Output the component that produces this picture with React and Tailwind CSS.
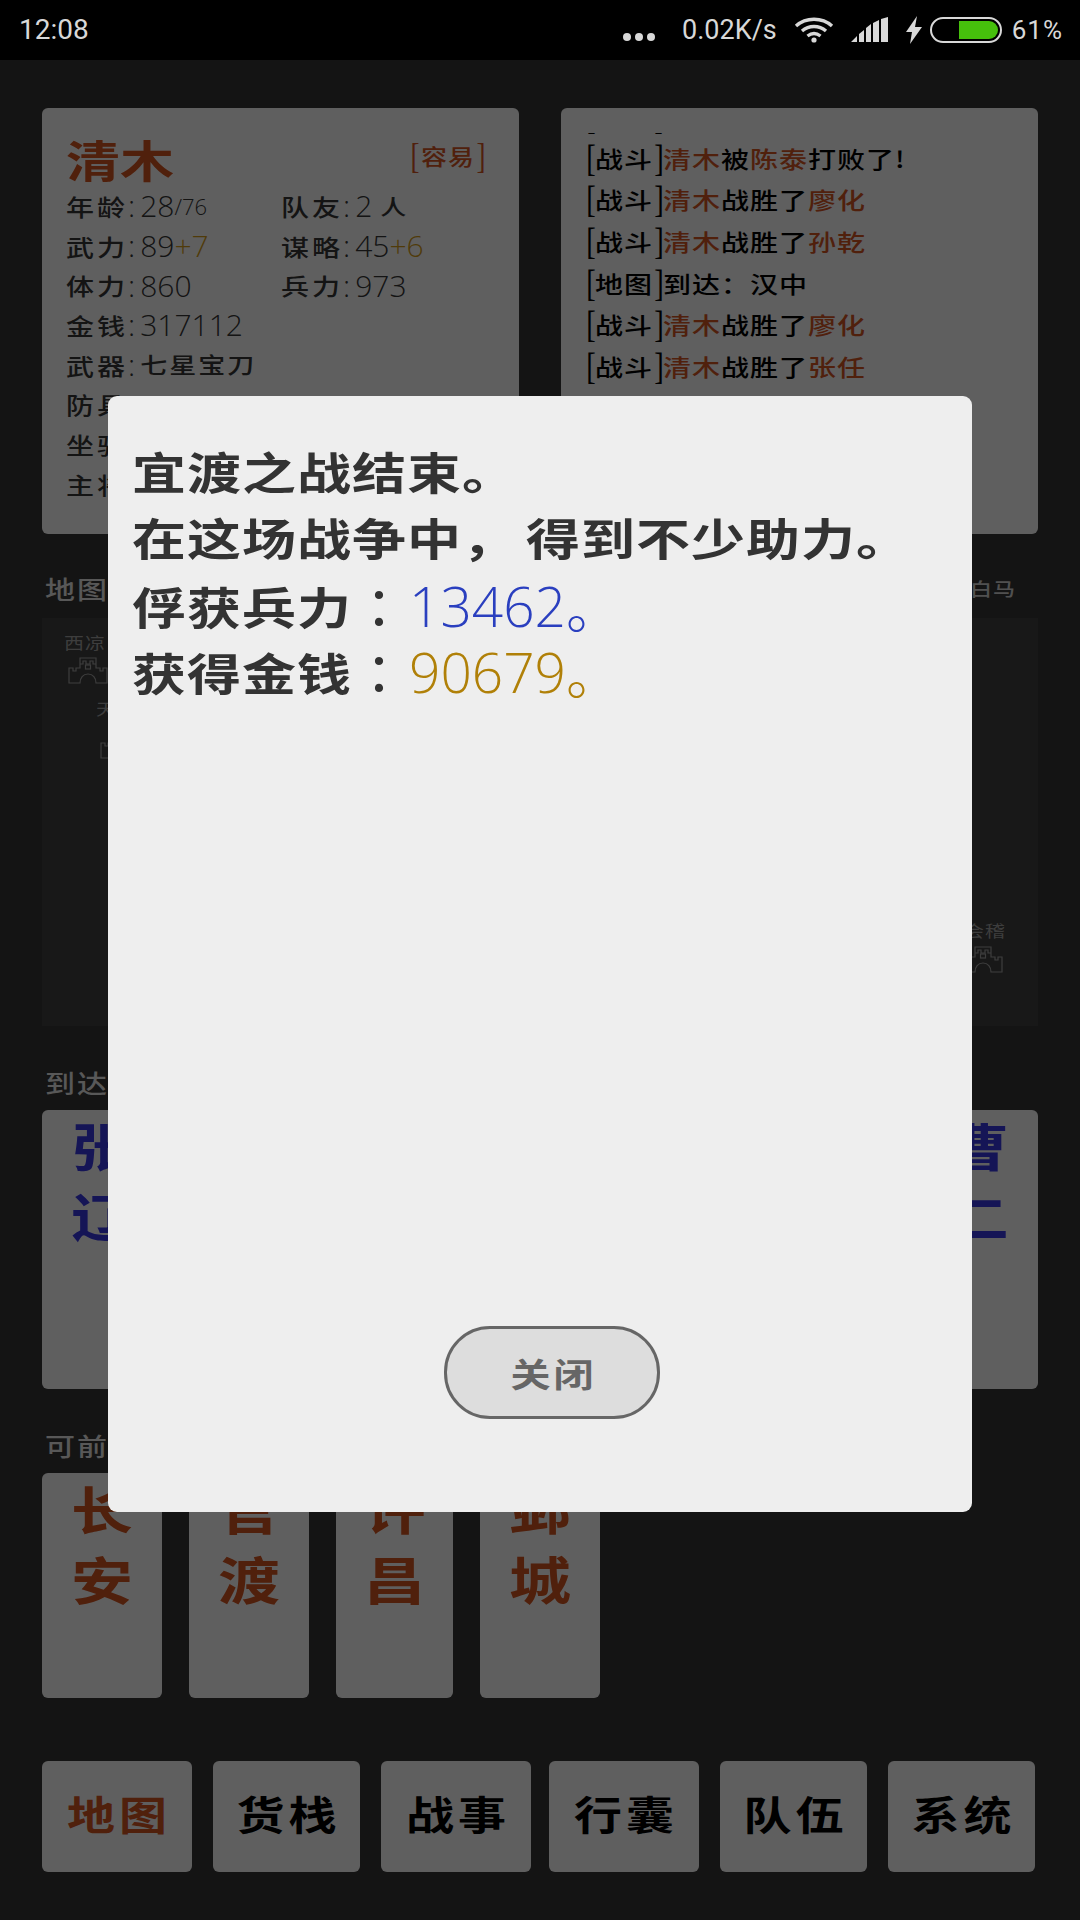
const cjk = "font-['Noto_Sans_CJK_SC',sans-serif]";
const num = "font-['Open_Sans',sans-serif] font-light";

function Squat({ className = "", children }) {
  return <span className={`inline-block origin-center scale-y-[0.82] ${className}`}>{children}</span>;
}

function Castle({ className = "" }) {
  return (
    <svg viewBox="0 0 40 27" className={className} fill="none" stroke="#9a9a9a" strokeWidth="1.2">
      <path d="M1 26V11h4v3h3v-3h4V1h16v10h4v3h3v-3h4v15H28c0-5-3-9-8-9s-8 4-8 9z" />
      <path d="M12 7h3V4h3v3h4V4h3v3h3" />
      <rect x="17.5" y="8" width="5" height="4" />
    </svg>
  );
}

function StatusBar() {
  return (
    <div className="relative z-20 h-[60px] bg-black flex items-center text-[#d8d8d8] font-['Roboto',sans-serif]">
      <span className="ml-[19px] text-[28px]">12:08</span>
      <div className="ml-auto flex items-center mr-[17px]">
        <svg viewBox="0 0 32 8" className="w-[32px] h-[8px] mt-[14px] fill-[#d8d8d8]">
          <circle cx="4" cy="4" r="4" />
          <circle cx="16" cy="4" r="4" />
          <circle cx="28" cy="4" r="4" />
        </svg>
        <span className="ml-[27px] text-[27px]">0.02K/s</span>
        <svg viewBox="0 0 40 26" className="ml-[17px] w-[40px] h-[26px]" fill="none" stroke="#d8d8d8" strokeWidth="3.4">
          <path d="M2 9c10-9 26-9 36 0" />
          <path d="M8 14c7-6 17-6 24 0" />
          <path d="M13.500 19c4-3 9-3 13 0" />
          <circle cx="20" cy="23" r="2.600" fill="#d8d8d8" stroke="none" />
        </svg>
        <svg viewBox="0 0 38 26" className="ml-[17px] w-[38px] h-[26px] fill-[#d8d8d8]">
          <path d="M0 25l6-6v6zM8 17l5-4v12H8zM15 11l5-4v18h-5zM22 6l6-3v22h-6zM30 2l7-2v25h-7z" />
        </svg>
        <svg viewBox="0 0 18 28" className="ml-[16px] w-[18px] h-[28px] fill-[#d8d8d8]">
          <path d="M12 0L1 16h6L5 28l12-17h-7z" />
        </svg>
        <div className="ml-[7px] w-[72px] h-[26px] rounded-full border-2 border-[#d8d8d8] flex justify-end items-center pr-[2px]">
          <div className="w-[39px] h-[18px] bg-[#46c00c] rounded-r-full" />
        </div>
        <span className="ml-[10px] text-[26px] tracking-[1px]">61%</span>
      </div>
    </div>
  );
}

function Stat({ label, children, className = "" }) {
  return (
    <div className={`flex items-center h-[39.700px] ${className}`}>
      <Squat className="text-[28px] font-medium tracking-[3px] text-[#333]">{label}</Squat>
      <span className={`${num} text-[30px] text-[#333]`}>:</span>
      <span className={`${num} ml-[5px] text-[30px] text-[#333] flex items-center`}>{children}</span>
    </div>
  );
}

function InfoCard() {
  return (
    <div className="w-[477px] h-[426px] bg-[#eeeeee] rounded-[6px] pl-[24px] pr-[32px] pt-[22px]">
      <div className="flex justify-between items-start h-[58px]">
        <Squat className="text-[54px] leading-[58px] font-bold text-[#c8501f]">清木</Squat>
        <span className="flex items-center text-[#c8501f] text-[26px] leading-[30px] mt-[8px]">
          <span className="font-['Liberation_Serif',serif] font-normal text-[36px] leading-[36px] scale-x-75">[</span>
          <Squat className="font-medium tracking-[1px]">容易</Squat>
          <span className="font-['Liberation_Serif',serif] font-normal text-[36px] leading-[36px] scale-x-75">]</span>
        </span>
      </div>
      <div className="grid grid-cols-[215px_1fr] mt-[-2px]">
        <Stat label="年龄">
          28<span className="text-[22px] mt-[2px]">/76</span>
        </Stat>
        <Stat label="队友">
          2<Squat className={`${cjk} ml-[8px] text-[26px] font-medium`}>人</Squat>
        </Stat>
        <Stat label="武力">
          89<span className="text-[#c89418]">+7</span>
        </Stat>
        <Stat label="谋略">
          45<span className="text-[#c89418]">+6</span>
        </Stat>
        <Stat label="体力">860</Stat>
        <Stat label="兵力">973</Stat>
        <Stat label="金钱" className="col-span-2">317112</Stat>
        <Stat label="武器" className="col-span-2">
          <Squat className={`${cjk} text-[27px] font-medium tracking-[2px]`}>七星宝刀</Squat>
        </Stat>
        <Stat label="防具" className="col-span-2" />
        <Stat label="坐骑" className="col-span-2" />
        <Stat label="主将" className="col-span-2" />
      </div>
    </div>
  );
}

function LogLine({ tag, children, className = "" }) {
  return (
    <div className={`h-[41.700px] flex items-center text-[28px] font-medium text-black whitespace-nowrap ${className}`}>
      <span className="font-['Liberation_Serif',serif] font-normal text-[38px] leading-[38px] scale-x-75 w-[10px]">[</span>
      <Squat className="tracking-[1px]">{tag}</Squat>
      <span className="font-['Liberation_Serif',serif] font-normal text-[38px] leading-[38px] scale-x-75 w-[10px]">]</span>
      <Squat className="tracking-[1px]">{children}</Squat>
    </div>
  );
}

function Me() {
  return <span className="text-[#c8501f]">清木</span>;
}

function Foe({ children }) {
  return <span className="text-[#c8501f]">{children}</span>;
}

function LogCard() {
  return (
    <div className="w-[477px] h-[426px] bg-[#eeeeee] rounded-[6px] pl-[24px] pt-[25px]">
      <div className="h-[290px] overflow-hidden">
        <LogLine tag="地图" className="mt-[-38px]">到达：汉中</LogLine>
        <LogLine tag="战斗"><Me />被<Foe>陈泰</Foe>打败了!</LogLine>
        <LogLine tag="战斗"><Me />战胜了<Foe>廖化</Foe></LogLine>
        <LogLine tag="战斗"><Me />战胜了<Foe>孙乾</Foe></LogLine>
        <LogLine tag="地图">到达：汉中</LogLine>
        <LogLine tag="战斗"><Me />战胜了<Foe>廖化</Foe></LogLine>
        <LogLine tag="战斗"><Me />战胜了<Foe>张任</Foe></LogLine>
      </div>
    </div>
  );
}

function SectionLabel({ children, right, pad = "pb-[12px]" }) {
  return (
    <div className={`h-[84px] flex items-end justify-between pl-[3px] pr-[22px] text-[#dcdcdc] ${pad}`}>
      <Squat className="text-[30px] leading-[32px] font-medium tracking-[2px]">{children}</Squat>
      {right && <Squat className="text-[22px] leading-[32px] font-medium tracking-[1px] text-[#c8c8c8]">{right}</Squat>}
    </div>
  );
}

function MapNode({ name, className, castleClass = "" }) {
  return (
    <div className={`absolute flex flex-col items-start ${className}`}>
      <Squat className="text-[20px] leading-[24px] text-[#9a9a9a] whitespace-nowrap tracking-[1px]">{name}</Squat>
      <Castle className={`w-[40px] h-[27px] ${castleClass}`} />
    </div>
  );
}

function GameMap() {
  return (
    <div className="relative w-[996px] h-[408px] bg-[#3c3c3c]">
      <MapNode name="西凉" className="left-[22px] top-[12px]" castleClass="ml-[4px] mt-[3px]" />
      <MapNode name="天水" className="left-[54px] top-[78px]" castleClass="ml-[4px] mt-[12px]" />
      <MapNode name="会稽" className="left-[922px] top-[300px]" castleClass="ml-[-1px] mt-[4px]" />
    </div>
  );
}

function TallCard({ chars, tone, width = "w-[120px]" }) {
  return (
    <div className={`${width} h-full bg-[#eeeeee] rounded-[6px] flex flex-col items-center text-[62px] leading-[70px] font-bold ${tone}`}>
      {chars.map((c) => (
        <Squat key={c}>{c}</Squat>
      ))}
    </div>
  );
}

const navItems = [
  { label: "地图", cls: "w-[150px] mr-[21px] text-[#c8501f]" },
  { label: "货栈", cls: "w-[147px] mr-[21px] text-black" },
  { label: "战事", cls: "w-[150px] mr-[18px] text-black" },
  { label: "行囊", cls: "w-[150px] mr-[21px] text-black" },
  { label: "队伍", cls: "w-[147px] mr-[21px] text-black" },
  { label: "系统", cls: "w-[147px] text-black" },
];

function BottomNav() {
  return (
    <div className="flex h-[111px] mt-[63px]">
      {navItems.map((item) => (
        <div
          key={item.label}
          className={`${item.cls} h-full bg-[#eeeeee] rounded-[6px] flex items-center justify-center pb-[8px] text-[48px] font-bold`}
        >
          <Squat className="tracking-[4px] mr-[-4px]">{item.label}</Squat>
        </div>
      ))}
    </div>
  );
}

function ResultModal() {
  return (
    <div className="absolute z-10 left-[108px] top-[396px] w-[864px] h-[1116px] bg-[#eeeeee] rounded-[9px] flex flex-col pt-[42px] px-[24px] pb-[93px] text-[#333] text-[54px]">
      <div className="h-[66px] leading-[66px] font-bold"><Squat className="tracking-[1px]">宜渡之战结束。</Squat></div>
      <div className="h-[66px] leading-[66px] font-bold whitespace-nowrap">
        <Squat className="tracking-[1px]">在这场战争中，</Squat>
        <Squat className="ml-[9px] tracking-[1px]">得到不少助力。</Squat>
      </div>
      <div className="h-[66px] mt-[3px] leading-[66px] flex">
        <Squat className="font-bold tracking-[1px]">俘获兵力</Squat>
        <span className="w-[53px] font-['Noto_Sans_CJK_TC',sans-serif]">：</span>
        <span className={`${num} ml-[4px] text-[#2a3fbf] text-[55px]`}>13462</span>
        <span className="text-[#2a3fbf] font-light">。</span>
      </div>
      <div className="h-[66px] leading-[66px] flex">
        <Squat className="font-bold tracking-[1px]">获得金钱</Squat>
        <span className="w-[53px] font-['Noto_Sans_CJK_TC',sans-serif]">：</span>
        <span className={`${num} ml-[4px] text-[#b08008] text-[55px]`}>90679</span>
        <span className="text-[#b08008] font-light">。</span>
      </div>
      <button className="mt-auto self-center ml-[24px] w-[216px] h-[93px] rounded-[46px] border-[3px] border-[#666] bg-[#dddddd] text-[#666] text-[40px] font-bold">
        <Squat className="tracking-[3px] mr-[-3px]">关闭</Squat>
      </button>
    </div>
  );
}

export default function App() {
  return (
    <div className={`${cjk} relative w-[1080px] h-[1920px] overflow-hidden bg-[#323232]`}>
      <StatusBar />
      <div className="px-[42px] pt-[48px]">
        <div className="flex gap-[42px]">
          <InfoCard />
          <LogCard />
        </div>
        <SectionLabel right="白马" pad="pb-[14px]">地图</SectionLabel>
        <GameMap />
        <SectionLabel>到达</SectionLabel>
        <div className="flex justify-between h-[279px]">
          <TallCard chars={["张", "辽"]} tone="text-[#3535d8]" />
          <TallCard chars={["曹", "二"]} tone="text-[#3535d8]" />
        </div>
        <SectionLabel>可前往</SectionLabel>
        <div className="flex gap-[27px] h-[225px]">
          <TallCard chars={["长", "安"]} tone="text-[#c8501f]" />
          <TallCard chars={["官", "渡"]} tone="text-[#c8501f]" />
          <TallCard chars={["许", "昌"]} tone="text-[#c8501f]" width="w-[117px]" />
          <TallCard chars={["邺", "城"]} tone="text-[#c8501f]" />
        </div>
        <BottomNav />
      </div>
      <div className="absolute inset-0 bg-black/60" />
      <ResultModal />
    </div>
  );
}
